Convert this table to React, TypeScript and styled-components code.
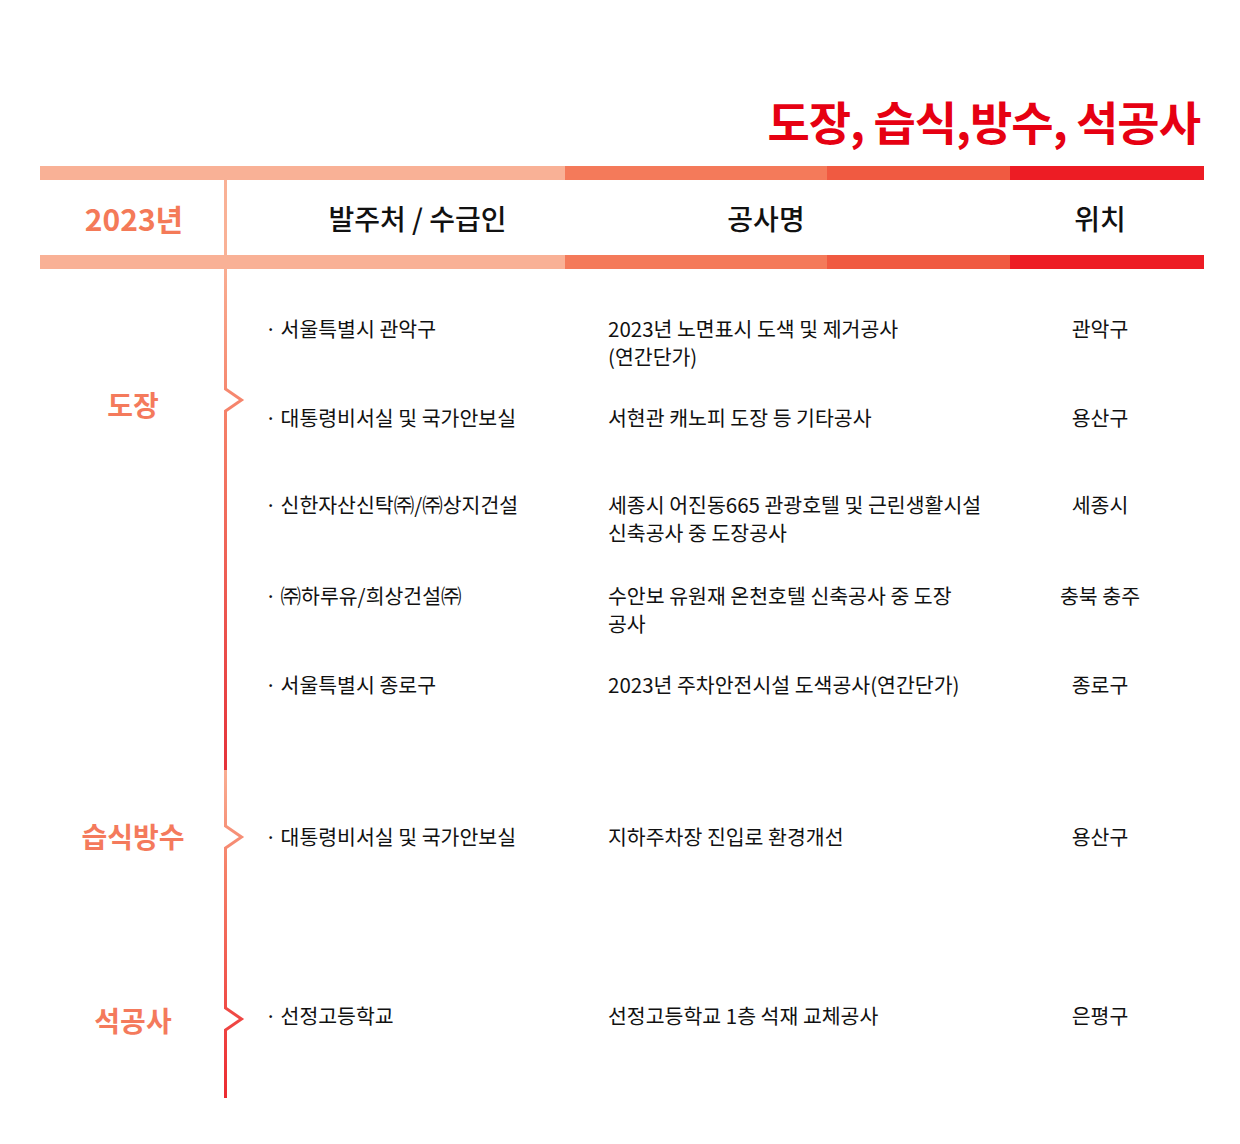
import React from "react";
import styled, { createGlobalStyle } from "styled-components";

const GlobalStyle = createGlobalStyle`
  html, body { margin: 0; padding: 0; background: #ffffff; }
  body {
    font-family: "Noto Sans CJK KR", "Noto Sans", sans-serif;
    -webkit-font-smoothing: antialiased;
  }
`;

const Page = styled.div`
  width: 1240px;
  min-height: 1144px;
  box-sizing: border-box;
  padding: 92px 36px 0 40px;
`;

const Title = styled.h1`
  margin: 0;
  padding-right: 4px;
  text-align: right;
  font-size: 46px;
  line-height: 56px;
  font-weight: 700;
  letter-spacing: -1px;
  color: #e60012;
`;

const Bar = styled.div<{ $mt?: number }>`
  display: grid;
  grid-template-columns: 525px 262px 183px 1fr;
  height: 14px;
  margin-top: ${(p) => p.$mt ?? 0}px;
`;

const BarSegment = styled.div<{ $color: string }>`
  background: ${(p) => p.$color};
`;

const Header = styled.div`
  display: grid;
  grid-template-columns: 184px 384px 388px 208px;
  height: 75px;
`;

const HeaderYear = styled.div`
  display: flex;
  align-items: center;
  justify-content: center;
  padding-left: 4px;
  font-size: 30px;
  font-weight: 600;
  color: #f47a58;
`;

const HeaderCell = styled.div<{ $divider?: boolean; $padRight?: number }>`
  display: flex;
  align-items: center;
  justify-content: center;
  box-sizing: border-box;
  padding-right: ${(p) => p.$padRight ?? 0}px;
  border-left: ${(p) => (p.$divider ? "3px solid #f9b196" : "none")};
  font-size: 28px;
  font-weight: 500;
  color: #111111;
`;

const Group = styled.div<{ $height: number }>`
  display: grid;
  grid-template-columns: 184px 20px 1fr;
  height: ${(p) => p.$height}px;
`;

const LabelColumn = styled.div<{ $top: number }>`
  display: flex;
  flex-direction: column;
  align-items: center;
  padding-top: ${(p) => p.$top}px;
`;

const CategoryLabel = styled.div<{ $mt?: number }>`
  margin-top: ${(p) => p.$mt ?? 0}px;
  font-size: 28px;
  line-height: 30px;
  font-weight: 700;
  color: #f47a5c;
  padding-left: 2px;
`;

const TimelineSvg = styled.svg`
  display: block;
  overflow: visible;
`;

const RowList = styled.div<{ $top: number }>`
  display: flex;
  flex-direction: column;
  padding-top: ${(p) => p.$top}px;
`;

const Row = styled.div<{ $min: number }>`
  display: grid;
  grid-template-columns: 364px 388px 208px;
  min-height: ${(p) => p.$min}px;
  font-size: 20.5px;
  line-height: 28px;
  color: #111111;
  align-content: start;
`;

const Client = styled.div`
  display: flex;
  align-items: baseline;
  gap: 4px;
  padding-left: 21px;
`;

const Bullet = styled.span`
  display: inline-block;
`;

const Project = styled.div`
  white-space: nowrap;
`;

const Location = styled.div`
  text-align: center;
`;

type TimelineProps = { height: number; tips: number[]; from: string; to: string; id: string };

const Timeline: React.FC<TimelineProps> = ({ height, tips, from, to, id }) => {
  let d = "M1.5 0";
  tips.forEach((t) => {
    d += ` V${t - 11} L17.5 ${t} L1.5 ${t + 11}`;
  });
  d += ` V${height}`;
  return (
    <TimelineSvg width={20} height={height} viewBox={`0 0 20 ${height}`}>
      <defs>
        <linearGradient id={id} gradientUnits="userSpaceOnUse" x1="0" y1="0" x2="0" y2={height}>
          <stop offset="0" stopColor={from} />
          <stop offset="0.3" stopColor="#f58068" />
          <stop offset="1" stopColor={to} />
        </linearGradient>
      </defs>
      <path d={d} fill="none" stroke={`url(#${id})`} strokeWidth={3} strokeLinejoin="miter" />
    </TimelineSvg>
  );
};

type Item = { client: string; project: React.ReactNode; location: string; min: number };

const paintItems: Item[] = [
  {
    client: "서울특별시 관악구",
    project: (
      <>
        2023년 노면표시 도색 및 제거공사
        <br />
        (연간단가)
      </>
    ),
    location: "관악구",
    min: 89,
  },
  { client: "대통령비서실 및 국가안보실", project: "서현관 캐노피 도장 등 기타공사", location: "용산구", min: 87 },
  {
    client: "신한자산신탁㈜/㈜상지건설",
    project: (
      <>
        세종시 어진동665 관광호텔 및 근린생활시설
        <br />
        신축공사 중 도장공사
      </>
    ),
    location: "세종시",
    min: 91,
  },
  {
    client: "㈜하루유/희상건설㈜",
    project: (
      <>
        수안보 유원재 온천호텔 신축공사 중 도장
        <br />
        공사
      </>
    ),
    location: "충북 충주",
    min: 89,
  },
  { client: "서울특별시 종로구", project: "2023년 주차안전시설 도색공사(연간단가)", location: "종로구", min: 28 },
];

const otherItems: Item[] = [
  { client: "대통령비서실 및 국가안보실", project: "지하주차장 진입로 환경개선", location: "용산구", min: 179 },
  { client: "선정고등학교", project: "선정고등학교 1층 석재 교체공사", location: "은평구", min: 28 },
];

const renderRows = (items: Item[]) =>
  items.map((it, i) => (
    <Row key={i} $min={it.min}>
      <Client>
        <Bullet>·</Bullet>
        <span>{it.client}</span>
      </Client>
      <Project>{it.project}</Project>
      <Location>{it.location}</Location>
    </Row>
  ));

export default function App() {
  return (
    <>
      <GlobalStyle />
      <Page>
        <Title>도장, 습식,방수, 석공사</Title>
        <Bar $mt={18}>
          <BarSegment $color="#f9b196" />
          <BarSegment $color="#f47a5a" />
          <BarSegment $color="#f05a41" />
          <BarSegment $color="#ed1c24" />
        </Bar>
        <Header>
          <HeaderYear>2023년</HeaderYear>
          <HeaderCell $divider>발주처 / 수급인</HeaderCell>
          <HeaderCell $padRight={72}>공사명</HeaderCell>
          <HeaderCell>위치</HeaderCell>
        </Header>
        <Bar>
          <BarSegment $color="#f9b196" />
          <BarSegment $color="#f47a5a" />
          <BarSegment $color="#f05a41" />
          <BarSegment $color="#ed1c24" />
        </Bar>

        <Group $height={501}>
          <LabelColumn $top={120}>
            <CategoryLabel>도장</CategoryLabel>
          </LabelColumn>
          <Timeline id="g1" height={501} tips={[131]} from="#f9ad92" to="#e5323a" />
          <RowList $top={45}>{renderRows(paintItems)}</RowList>
        </Group>

        <Group $height={328}>
          <LabelColumn $top={51}>
            <CategoryLabel>습식방수</CategoryLabel>
            <CategoryLabel $mt={154}>석공사</CategoryLabel>
          </LabelColumn>
          <Timeline id="g2" height={328} tips={[67, 249]} from="#f9ad92" to="#ec2a31" />
          <RowList $top={52}>{renderRows(otherItems)}</RowList>
        </Group>
      </Page>
    </>
  );
}
